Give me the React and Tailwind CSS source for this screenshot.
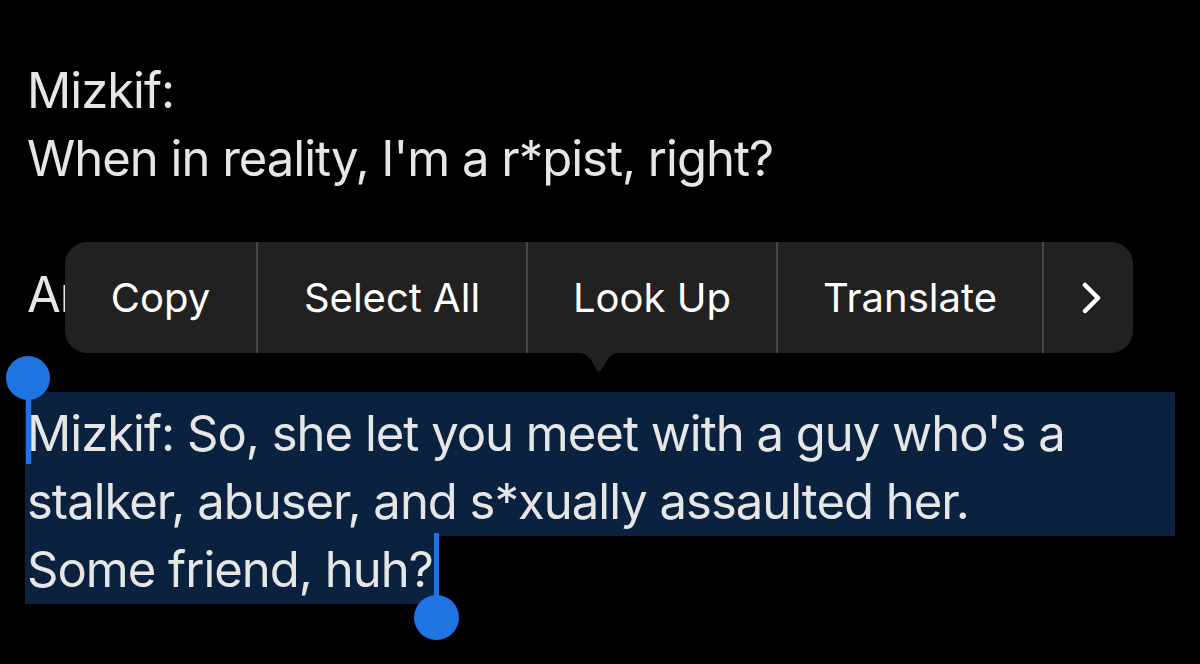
import React from 'react';

const menuItems = [
  { label: 'Copy', w: 'w-[191px]', first: true },
  { label: 'Select All', w: 'w-[270px]' },
  { label: 'Look Up', w: 'w-[250px]' },
  { label: 'Translate', w: 'w-[266px]' },
];

export default function App() {
  return (
    <div
      className="relative w-[1200px] h-[664px] overflow-hidden bg-black text-[#e6e6e6]"
      style={{ fontFamily: 'Inter, "Noto Sans", sans-serif' }}
    >
      {/* Message text */}
      <div className="pt-[57px] pl-[25px] text-[49px] leading-[68px] tracking-[-1px]">
        <div className="pl-[2px]">Mizkif:</div>
        <div className="pl-[2px]">When in reality, I'm a r*pist, right?</div>
        <div className="h-[68px]"></div>
        <div className="pl-[2px] whitespace-nowrap">An</div>

        {/* Selected paragraph */}
        <div className="relative mt-[63px]">
          <div className="w-[1150px] pt-[8px] bg-[#0a213f] pl-[2px] whitespace-nowrap">
            Mizkif: So, she let you meet with a guy who's a
          </div>
          <div className="w-[1150px] bg-[#0a213f] pl-[2px] whitespace-nowrap">
            stalker, abuser, and s*xually assaulted her.
          </div>
          <div className="w-[412px] h-[68px] bg-[#0a213f] pl-[2px] whitespace-nowrap">
            Some friend, huh?
          </div>

          {/* Selection handles */}
          <div className="absolute -left-[19px] -top-[36px] flex flex-col items-center">
            <div className="w-[44px] h-[44px] rounded-full bg-[#1f74e2]"></div>
            <div className="-mt-[20px] w-[5px] h-[84px] bg-[#1f74e2]"></div>
          </div>
          <div className="absolute left-[389px] top-[141px] flex flex-col items-center">
            <div className="w-[5px] h-[84px] bg-[#1f74e2]"></div>
            <div className="-mt-[22px] w-[45px] h-[45px] rounded-full bg-[#1f74e2]"></div>
          </div>
        </div>
      </div>

      {/* Edit menu */}
      <div className="absolute left-[65px] top-[242px] w-[1068px] h-[111px]">
        <div className="flex h-full rounded-[22px] bg-[#212121] overflow-hidden">
          {menuItems.map((item) => (
            <div
              key={item.label}
              className={`${item.w} h-full flex items-center justify-center text-[40px] leading-none text-white ${item.first ? '' : 'border-l-2 border-[#474747]'}`}
            >
              {item.label}
            </div>
          ))}
          <div className="w-[91px] h-full flex items-center pl-[38px] border-l-2 border-[#474747]">
            <svg width="20" height="32" viewBox="0 0 20 32" fill="none">
              <polyline points="3,3 16,16 3,29" stroke="white" strokeWidth="4.5" strokeLinecap="round" strokeLinejoin="round" />
            </svg>
          </div>
        </div>
        <svg className="absolute left-[507px] top-[110px]" width="54" height="22" viewBox="0 0 54 22">
          <path d="M0 0 C10 0 14 2 19 8 L24 17 Q27 22 30 17 L35 8 C40 2 44 0 54 0 Z" fill="#212121" />
        </svg>
      </div>
    </div>
  );
}
